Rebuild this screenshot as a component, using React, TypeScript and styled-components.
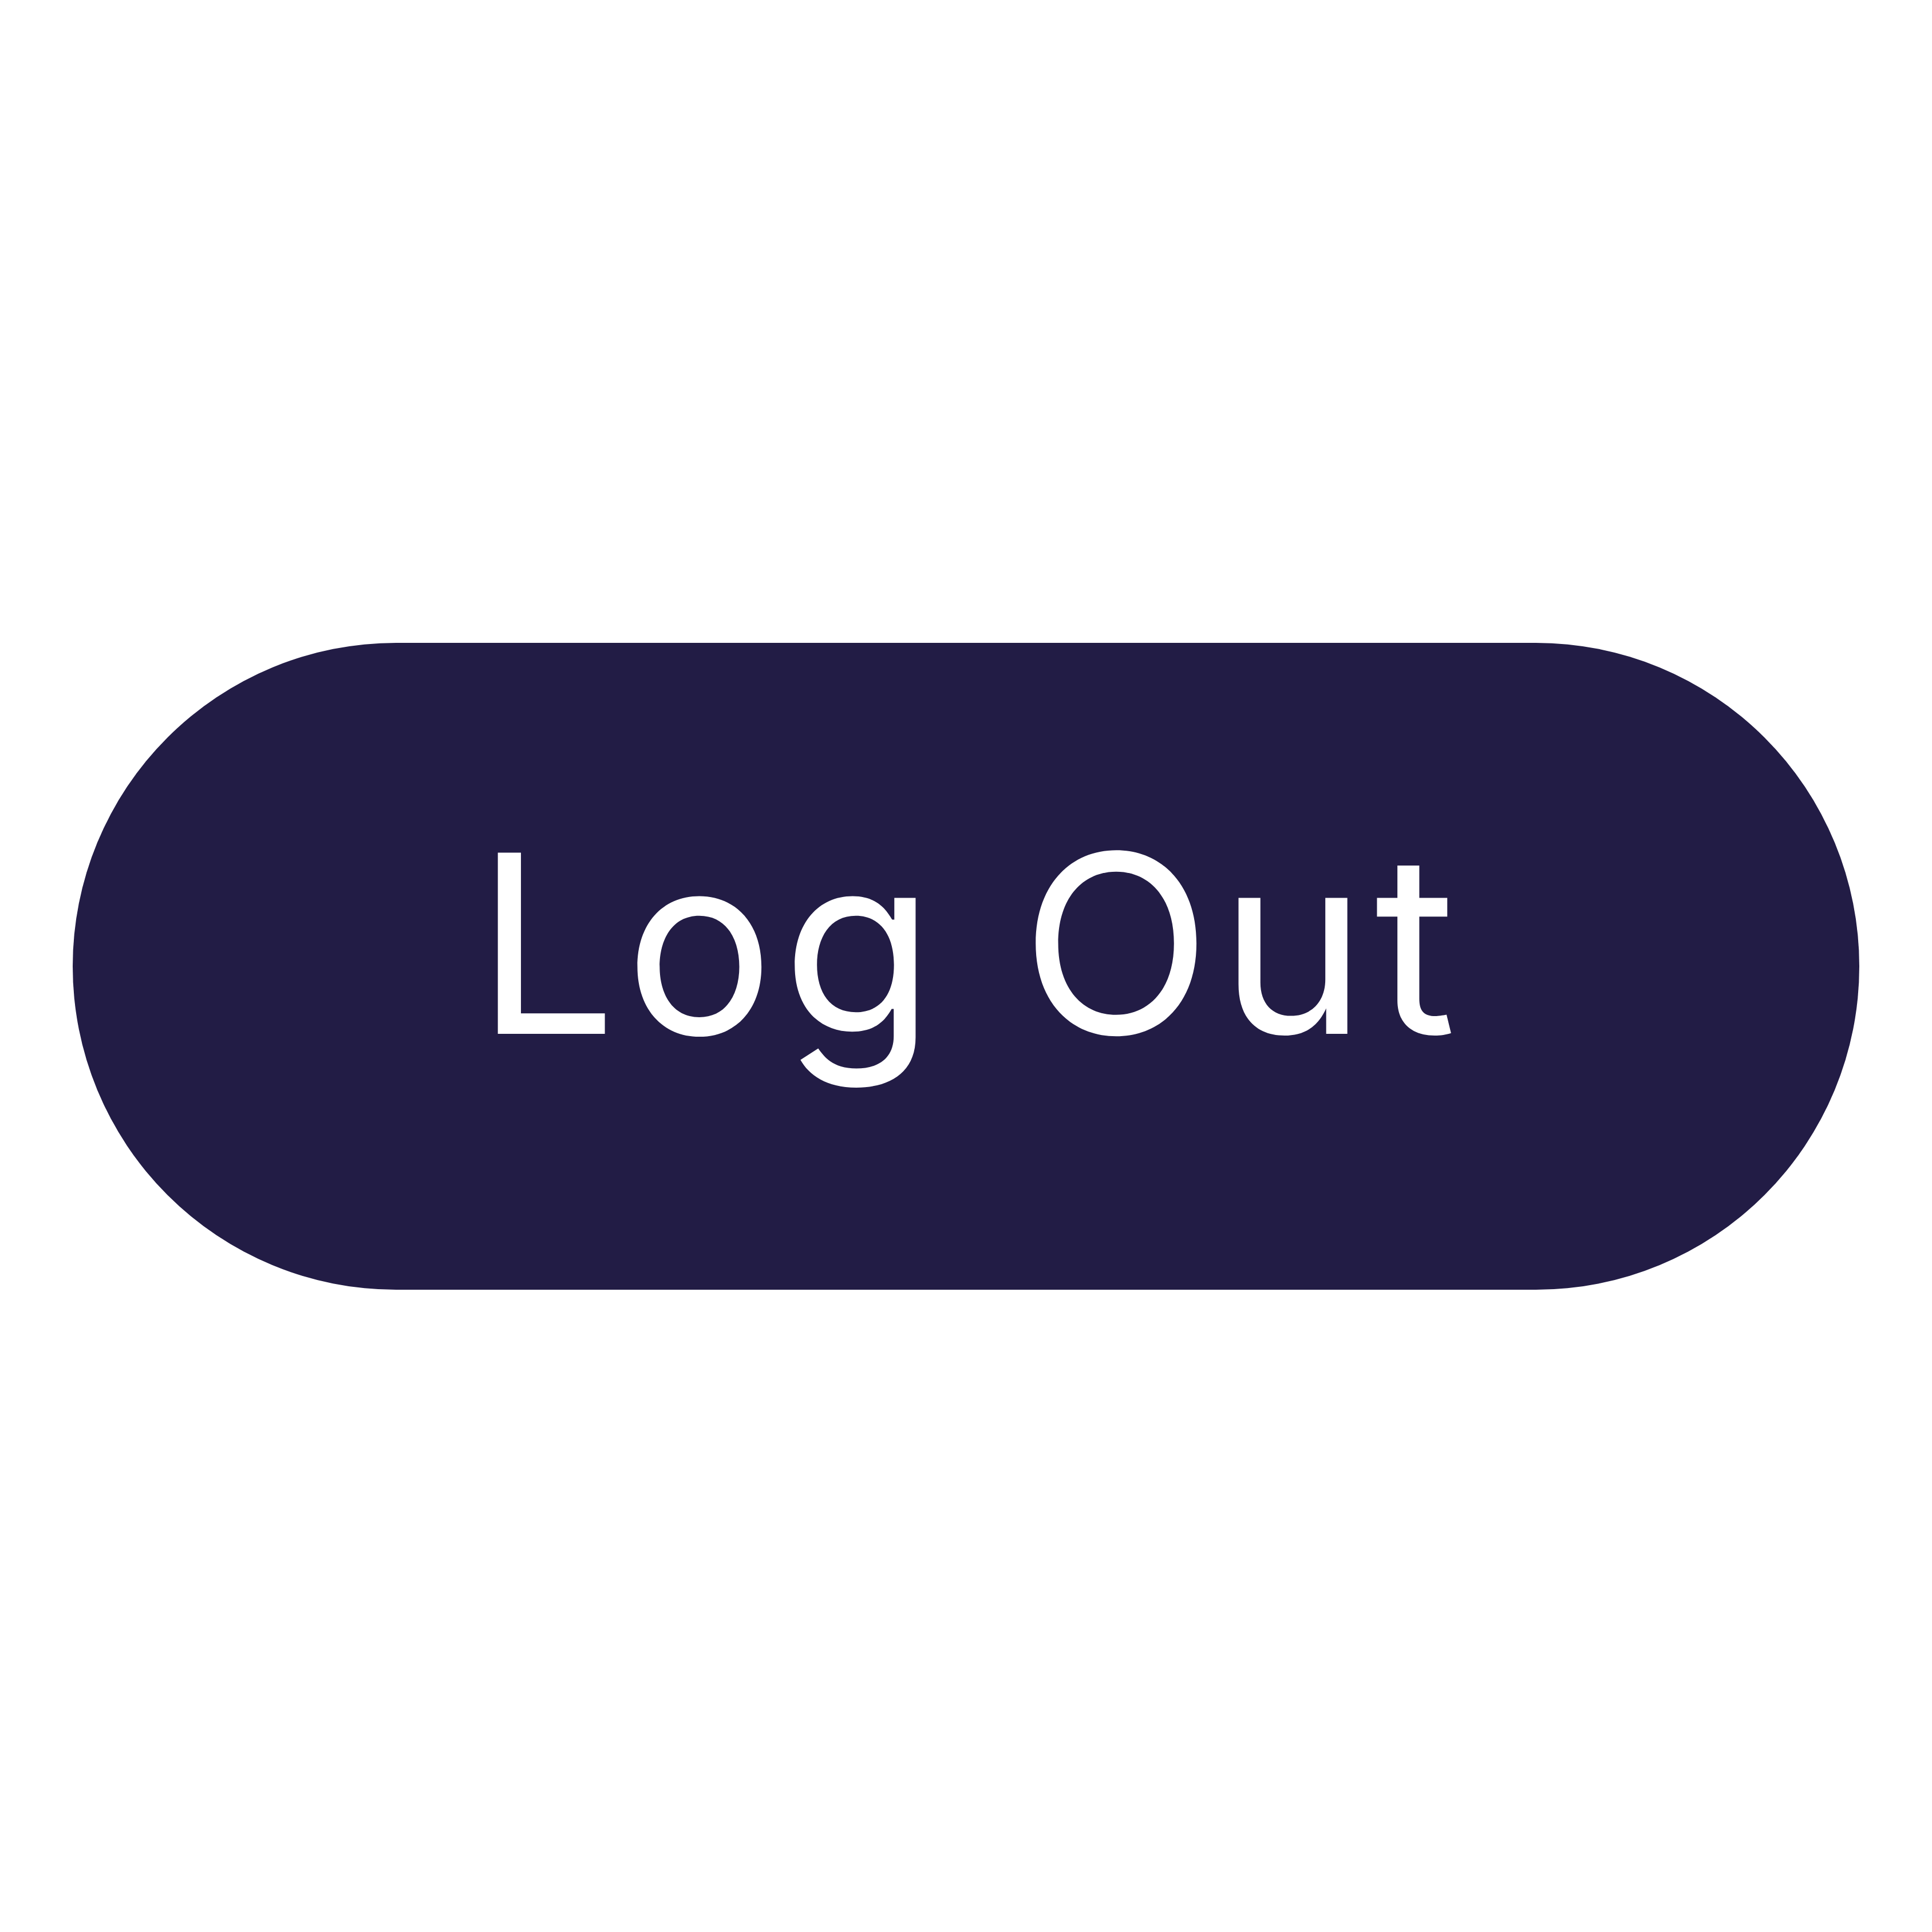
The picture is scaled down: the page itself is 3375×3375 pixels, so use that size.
import React from "react";
import styled, { createGlobalStyle } from "styled-components";

const Global = createGlobalStyle`
  html, body { margin: 0; padding: 0; background: #ffffff; }
  #root { width: 3375px; height: 3375px; }
`;

const Page = styled.main`
  width: 3375px;
  height: 3375px;
  display: flex;
  align-items: center;
  justify-content: center;
  background: #ffffff;
`;

const LogOutButton = styled.button`
  box-sizing: border-box;
  width: 3121px;
  height: 1130px;
  border: none;
  border-radius: 565px;
  background: #221c45;
  color: #ffffff;
  display: flex;
  align-items: center;
  justify-content: center;
  font-family: Inter, "Noto Sans", sans-serif;
  font-weight: 400;
  font-size: 435px;
  letter-spacing: 14px;
  line-height: 1;
  padding: 0 0 78px 14px;
  cursor: pointer;
`;

export default function App() {
  return (
    <>
      <Global />
      <Page>
        <LogOutButton>Log Out</LogOutButton>
      </Page>
    </>
  );
}
